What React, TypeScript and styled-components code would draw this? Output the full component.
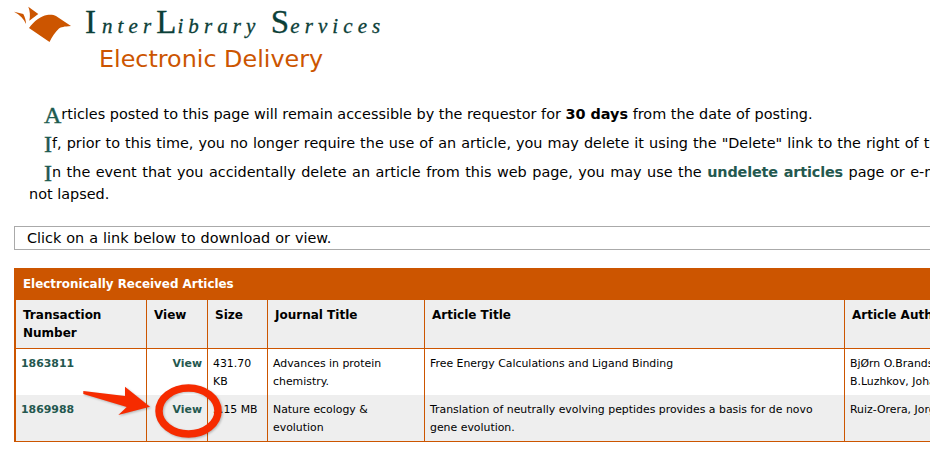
import styled, { createGlobalStyle } from "styled-components";

const GlobalStyle = createGlobalStyle`
  html, body {
    margin: 0;
    padding: 0;
    background: #fff;
    overflow: hidden;
    width: 930px;
    height: 453px;
  }
  body {
    font-family: "DejaVu Sans", Verdana, sans-serif;
    color: #000;
  }
`;

const Page = styled.div`
  position: relative;
  width: 930px;
  height: 453px;
  overflow: hidden;
`;

const Masthead = styled.header`
  display: flex;
  align-items: flex-start;
  padding: 6px 0 0 14px;
  height: 38px;
`;

const Wordmark = styled.div`
  margin: 1px 0 0 13px;
  font-family: "Liberation Serif", serif;
  font-style: italic;
  font-size: 21px;
  line-height: 30px;
  letter-spacing: 5.1px;
  color: #0b4038;
  -webkit-text-stroke: 0.3px #0b4038;
  white-space: nowrap;
`;

const BigCap = styled.span<{ $gap?: number }>`
  font-style: normal;
  font-size: 33px;
  letter-spacing: ${({ $gap }) => $gap ?? 1}px;
`;

const PageTitle = styled.h1`
  margin: 0 0 0 99px;
  font-size: 23.85px;
  line-height: 30px;
  font-weight: 400;
  color: #cc5500;
  white-space: nowrap;
`;

const Intro = styled.section`
  padding: 0 0 0 29px;
  margin-top: 26px;
  width: 1300px;
`;

const Para = styled.p<{ $spread?: number }>`
  margin: 0;
  height: 29px;
  padding-left: 15px;
  font-size: 14.42px;
  line-height: 29px;
  white-space: nowrap;
  word-spacing: ${({ $spread }) => $spread ?? 0}px;
`;

const DropCap = styled.span`
  font-family: "Liberation Serif", serif;
  font-size: 24px;
  line-height: 20px;
  vertical-align: -4px;
  color: #1d5b50;
  -webkit-text-stroke: 0.4px #1d5b50;
`;

const TailLine = styled.p`
  margin: -4px 0 0 0;
  font-size: 14.42px;
  line-height: 22px;
`;

const LinkText = styled.a`
  font-weight: 700;
  letter-spacing: -0.15px;
  color: #24584f;
`;

const Notice = styled.div`
  margin: 21px 0 0 14px;
  width: 1000px;
  height: 22px;
  border: 1px solid #aaa;
  padding-left: 12px;
  font-size: 14.42px;
  line-height: 22px;
  word-spacing: 0.4px;
  white-space: nowrap;
`;

const Panel = styled.section`
  margin: 18px 0 0 14px;
  width: 1100px;
  border-left: 2px solid #cc5500;
  border-bottom: 1px solid #cc5500;
  background: #cc5500;
`;

const Banner = styled.div`
  height: 32px;
  padding-left: 7px;
  font-size: 11.9px;
  line-height: 32px;
  font-weight: 700;
  color: #fff;
`;

const Grid = styled.table`
  width: 100%;
  table-layout: fixed;
  border-collapse: separate;
  border-spacing: 0;
  background: #fff;
  font-size: 10.9px;
`;

const HeadCell = styled.th`
  padding: 6px 7px 0 7px;
  height: 42px;
  vertical-align: top;
  text-align: left;
  background: #eee;
  font-size: 12px;
  line-height: 18px;
  font-weight: 700;
  border-left: 1px solid #cc5500;
  border-bottom: 1px solid #cc5500;
  &:first-child {
    border-left: 0;
  }
`;

const Row = styled.tr<{ $shaded?: boolean }>`
  background: ${({ $shaded }) => ($shaded ? "#eee" : "#fff")};
`;

const Cell = styled.td<{ $right?: boolean }>`
  padding: 6px 5px 0 5px;
  height: 40px;
  vertical-align: top;
  line-height: 18px;
  white-space: pre-line;
  text-align: ${({ $right }) => ($right ? "right" : "left")};
  border-left: 1px solid #cc5500;
  &:first-child {
    border-left: 0;
  }
`;

const RowLink = styled.a`
  font-weight: 700;
  color: #24584f;
`;

const Callout = styled.svg`
  position: absolute;
  left: 75px;
  top: 380px;
  pointer-events: none;
  filter: drop-shadow(1px 1px 1px rgba(0, 0, 0, 0.25));
`;

const columns = [130, 61, 60, 157, 420, 272];

const articles = [
  {
    id: "1863811",
    size: "431.70 KB",
    journal: "Advances in protein chemistry.",
    title: "Free Energy Calculations and Ligand Binding",
    authors: "BjØrn O.Brandsdal\nB.Luzhkov, Johan",
  },
  {
    id: "1869988",
    size: "3.15 MB",
    journal: "Nature ecology & evolution",
    title: "Translation of neutrally evolving peptides provides a basis for de novo gene evolution.",
    authors: "Ruiz-Orera, Jorge",
  },
];

export default function App() {
  return (
    <Page>
      <GlobalStyle />
      <Masthead>
        <svg width="58" height="38" viewBox="0 0 58 38" aria-hidden="true">
          <path d="M15 22 C20 15 27 10 33 9 C37 8.5 40 9 42 10 L57 20 C50 20.5 47 21 45 22.5 C41 26 38 31 35.5 36 Z" fill="#cc5500" />
          <path d="M0 5.7 L9.3 8 C11 11 12 15 12 18 C10 13 6 9 0 5.7Z" fill="#cc5500" />
          <path d="M14.3 0.7 L24.3 8 L15.3 14.7 C16.5 10 16 5 14.3 0.7Z" fill="#cc5500" />
        </svg>
        <Wordmark>
          <BigCap $gap={6}>I</BigCap>nter<BigCap>L</BigCap>ibrary&nbsp;<BigCap>S</BigCap>ervices
        </Wordmark>
      </Masthead>
      <PageTitle>Electronic Delivery</PageTitle>
      <Intro>
        <Para>
          <DropCap>A</DropCap>rticles posted to this page will remain accessible by the requestor for <b>30 days</b> from the date of posting.
        </Para>
        <Para $spread={0.45}>
          <DropCap>I</DropCap>f, prior to this time, you no longer require the use of an article, you may delete it using the "Delete" link to the right of the
        </Para>
        <Para $spread={0.9}>
          <DropCap>I</DropCap>n the event that you accidentally delete an article from this web page, you may use the <LinkText>undelete articles</LinkText> page or e-mail
        </Para>
        <TailLine>not lapsed.</TailLine>
      </Intro>
      <Notice>Click on a link below to download or view.</Notice>
      <Panel>
        <Banner>Electronically Received Articles</Banner>
        <Grid>
          <colgroup>
            {columns.map((w, i) => (
              <col key={i} style={{ width: w }} />
            ))}
          </colgroup>
          <thead>
            <tr>
              <HeadCell>Transaction Number</HeadCell>
              <HeadCell>View</HeadCell>
              <HeadCell>Size</HeadCell>
              <HeadCell>Journal Title</HeadCell>
              <HeadCell>Article Title</HeadCell>
              <HeadCell>Article Author</HeadCell>
            </tr>
          </thead>
          <tbody>
            {articles.map((a, i) => (
              <Row key={a.id} $shaded={i === 1}>
                <Cell>
                  <RowLink>{a.id}</RowLink>
                </Cell>
                <Cell $right>
                  <RowLink>View</RowLink>
                </Cell>
                <Cell>{a.size}</Cell>
                <Cell>{a.journal}</Cell>
                <Cell>{a.title}</Cell>
                <Cell>{a.authors}</Cell>
              </Row>
            ))}
          </tbody>
        </Grid>
      </Panel>
      <Callout width="150" height="60" viewBox="0 0 150 60" aria-hidden="true">
        <path d="M8.3 11 L50 16 L50 6.7 L75 26.7 L43.3 35 L51.7 27 L8.3 14 Z" fill="#f62b00" />
        <ellipse cx="113.5" cy="31" rx="29.5" ry="23" fill="none" stroke="#f62b00" strokeWidth="7.5" />
      </Callout>
    </Page>
  );
}
